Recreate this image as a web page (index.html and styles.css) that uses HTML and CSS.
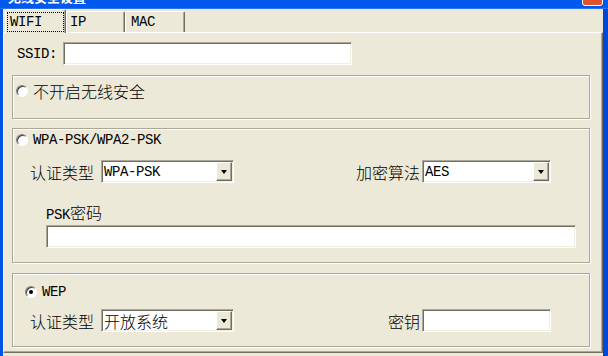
FILE: index.html
```html
<!DOCTYPE html>
<html lang="zh-CN">
<head>
    <meta charset="UTF-8">
    <meta name="viewport" content="width=device-width, initial-scale=1.0">
    <title>无线安全设置</title>
    <link rel="stylesheet" href="styles.css">
</head>
<body>
    <div class="window">
        <div class="titlebar">
            <span class="title">无线安全设置</span>
            <span class="close"></span>
        </div>
        <div class="frame">
            <div class="tabs">
                <div class="tab active"><span class="focus">WIFI</span></div>
                <div class="tab tab-ip"><span>IP</span></div>
                <div class="tab tab-mac"><span>MAC</span></div>
            </div>
            <div class="page">
                <div class="ssid-row">
                    <span class="ssid-label">SSID:</span>
                    <div class="field ssid-field"></div>
                </div>

                <!-- 不开启 -->
                <div class="group group-none">
                    <div class="radio-row">
                        <span class="radio"></span>
                        <span class="zh">不开启无线安全</span>
                    </div>
                </div>

                <!-- WPA -->
                <div class="group group-wpa">
                    <div class="radio-row">
                        <span class="radio"></span>
                        <span>WPA-PSK/WPA2-PSK</span>
                    </div>
                    <div class="form-row">
                        <span class="zh label">认证类型</span>
                        <div class="combo combo-left">
                            <span class="combo-value">WPA-PSK</span>
                            <span class="combo-btn"></span>
                        </div>
                        <span class="zh label-right">加密算法</span>
                        <div class="combo combo-right">
                            <span class="combo-value">AES</span>
                            <span class="combo-btn"></span>
                        </div>
                    </div>
                    <div class="psk-label">PSK<span class="zh">密码</span></div>
                    <div class="field psk-field"></div>
                </div>

                <!-- WEP -->
                <div class="group group-wep">
                    <div class="radio-row">
                        <span class="radio checked"></span>
                        <span>WEP</span>
                    </div>
                    <div class="form-row">
                        <span class="zh label">认证类型</span>
                        <div class="combo combo-left">
                            <span class="combo-value zh">开放系统</span>
                            <span class="combo-btn"></span>
                        </div>
                        <span class="zh label-right">密钥</span>
                        <div class="field key-field"></div>
                    </div>
                </div>
            </div>
        </div>
    </div>
</body>
</html>
```

FILE: styles.css
```css
body {
    margin: 0;
    overflow: hidden;
    background: #ECE9D8;
    font-family: "Liberation Mono", "Noto Sans CJK SC", monospace;
    font-size: 14px;
    letter-spacing: -0.4px;
    color: #000;
}

.zh {
    font-family: "Noto Sans CJK SC", sans-serif;
    font-size: 16px;
    line-height: 16px;
    letter-spacing: 0;
    font-weight: 300;
}

.window {
    height: 356px;
    display: flex;
    flex-direction: column;
}

/* title bar, mostly cut off */
.titlebar {
    height: 9px;
    flex-shrink: 0;
    display: flex;
    align-items: flex-start;
    overflow: hidden;
    background: #0058EE;
    border-bottom: 1px solid #2A73F0;
    box-sizing: border-box;
}

.title {
    margin: -10px 0 0 8px;
    color: #fff;
    font-family: "Noto Sans CJK SC", sans-serif;
    font-weight: bold;
    font-size: 13px;
    line-height: 14px;
    letter-spacing: 0;
}

.close {
    margin: -15px 5px 0 auto;
    width: 19px;
    height: 19px;
    background: #E1532F;
    border: 1px solid #fff;
    border-radius: 3px;
}

.frame {
    flex: 1;
    display: flex;
    flex-direction: column;
    border-left: 3px solid #0055E5;
    border-right: 5px solid #0047D8;
    padding-bottom: 3px;
}

/* tabs */
.tabs {
    height: 23px;
    flex-shrink: 0;
    display: flex;
    align-items: flex-end;
    padding-left: 2px;
}

.tab {
    box-sizing: border-box;
    height: 21px;
    border-top: 1px solid #fff;
    border-left: 1px solid #fff;
    border-right: 1px solid #716F64;
    border-radius: 2px 2px 0 0;
    box-shadow: inset -1px 0 0 #ACA899;
    line-height: 16px;
    padding-top: 2px;
}

.tab.active {
    position: relative;
    z-index: 1;
    width: 61px;
    height: 24px;
    margin-bottom: -1px;
    padding-top: 2px;
    background: #ECE9D8;
}

.focus {
    display: block;
    margin: 0 1px;
    height: 20px;
    box-sizing: border-box;
    border: 1px dotted #000;
    padding: 1px 0 0 2px;
}

.tab-ip {
    width: 59px;
    padding-left: 3px;
}

.tab-mac {
    width: 60px;
    padding-left: 5px;
}

/* page */
.page {
    flex: 1;
    border-top: 1px solid #fff;
    border-left: 1px solid #fff;
    border-right: 1px solid #716F64;
    border-bottom: 1px solid #716F64;
    box-shadow: inset -1px -1px 0 #ACA899;
    padding: 9px 12px 0 8px;
}

.ssid-row {
    display: flex;
    align-items: center;
    height: 23px;
    padding-left: 5px;
}

.ssid-label {
    margin-right: 6px;
}

.field {
    box-sizing: border-box;
    height: 23px;
    background: #fff;
    border: 1px solid;
    border-color: #ACA899 #fff #fff #ACA899;
    box-shadow: inset 1px 1px 0 #716F64, inset -1px -1px 0 #F1EFE2;
}

.ssid-field {
    width: 289px;
}

.group {
    box-sizing: border-box;
    border: 1px solid #ACA899;
    box-shadow: inset 1px 1px 0 #fff, 1px 1px 0 #fff;
}

.group-none {
    height: 44px;
    margin-top: 10px;
    padding: 5px 0 0 3px;
}

.group-wpa {
    height: 135px;
    margin-top: 9px;
    padding: 1px 0 0 3px;
}

.group-wep {
    height: 74px;
    margin-top: 10px;
    padding: 8px 0 0 12px;
}

.radio-row {
    display: flex;
    align-items: center;
    height: 20px;
}

.radio {
    position: relative;
    box-sizing: border-box;
    width: 12px;
    height: 12px;
    margin-right: 5px;
    border-radius: 50%;
    background: #fff;
    border: 1px solid;
    border-color: #808080 #fff #fff #808080;
    box-shadow: inset 1px 1px 0 #404040;
}

.radio.checked::after {
    content: "";
    position: absolute;
    left: 3px;
    top: 3px;
    width: 4px;
    height: 4px;
    border-radius: 50%;
    background: #000;
}

.form-row {
    display: flex;
    align-items: center;
    height: 23px;
    margin-top: 10px;
    padding-left: 14px;
}

.group-wep .form-row {
    margin-top: 7px;
    padding-left: 5px;
}

.label {
    margin-right: 7px;
}

.label-right {
    width: 66px;
    box-sizing: border-box;
    margin-left: 122px;
    padding-right: 2px;
    text-align: right;
}

.combo {
    box-sizing: border-box;
    height: 23px;
    display: flex;
    align-items: center;
    padding: 1px;
    background: #fff;
    border: 1px solid;
    border-color: #ACA899 #fff #fff #ACA899;
    box-shadow: inset 1px 1px 0 #716F64, inset -1px -1px 0 #F1EFE2;
}

.combo-left {
    width: 133px;
}

.combo-right {
    width: 129px;
}

.combo-value {
    flex: 1;
    padding-left: 1px;
}

.combo-btn {
    box-sizing: border-box;
    width: 16px;
    height: 19px;
    display: flex;
    align-items: center;
    justify-content: center;
    background: #ECE9D8;
    border: 1px solid;
    border-color: #fff #716F64 #716F64 #fff;
    box-shadow: inset -1px -1px 0 #ACA899;
}

.combo-btn::after {
    content: "";
    border-style: solid;
    border-width: 4px 3.5px 0 3.5px;
    border-color: #000 transparent transparent transparent;
}

.key-field {
    width: 129px;
}

.psk-label {
    margin: 21px 0 0 30px;
    height: 16px;
    line-height: 16px;
}

.psk-field {
    width: 530px;
    margin: 5px 0 0 30px;
}
```
